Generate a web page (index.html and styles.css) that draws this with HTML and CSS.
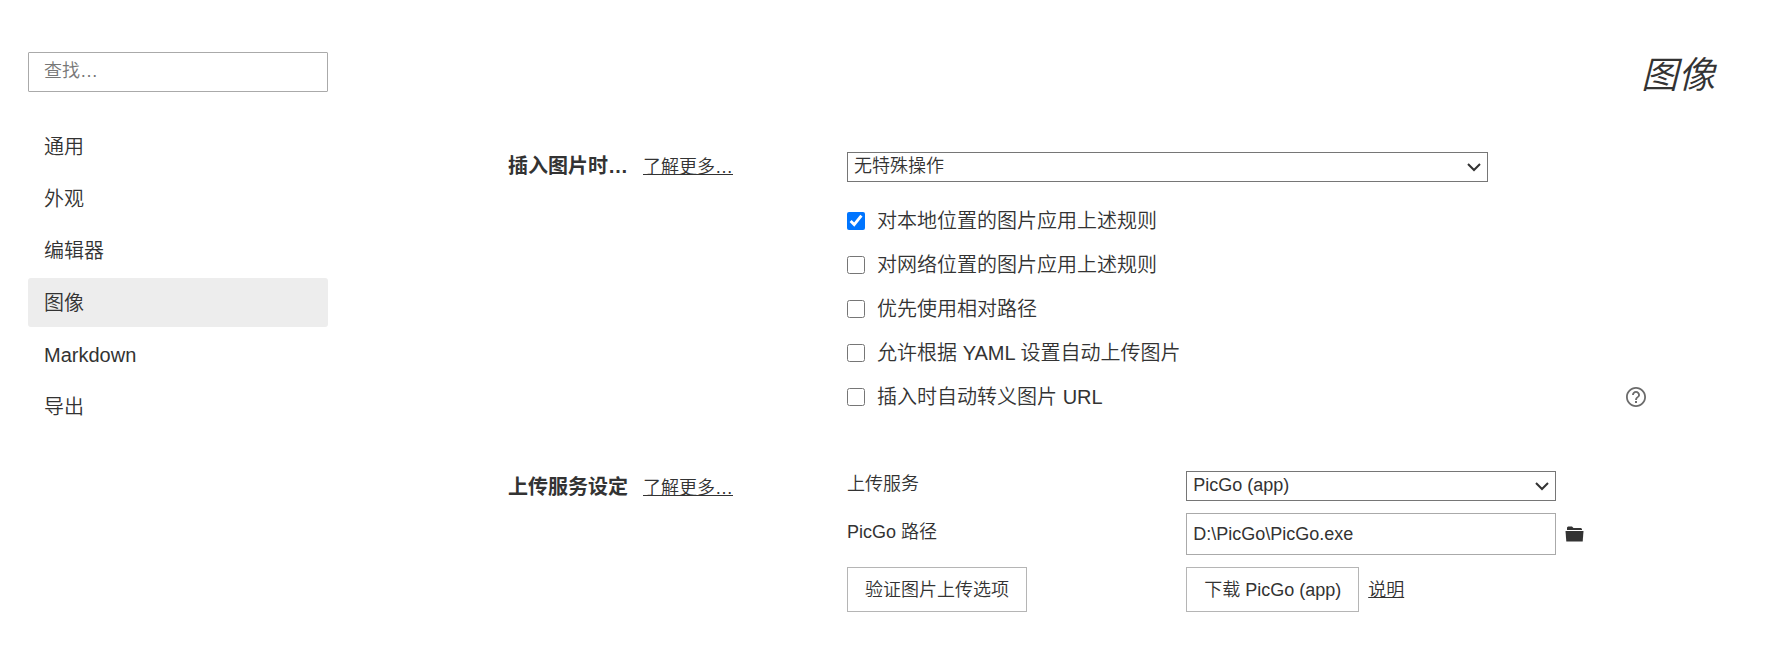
FILE: index.html
```html
<!DOCTYPE html>
<html lang="zh-CN">
<head>
    <meta charset="UTF-8">
    <meta name="viewport" content="width=device-width, initial-scale=1.0">
    <title>图像</title>
    <link rel="stylesheet" href="styles.css">
</head>
<body>
    <div class="preferences">
        <aside class="sidebar">
            <input type="search" class="search" placeholder="查找…" aria-label="查找">
            <nav class="menu">
                <a href="#">通用</a>
                <a href="#">外观</a>
                <a href="#">编辑器</a>
                <a href="#" class="active">图像</a>
                <a href="#">Markdown</a>
                <a href="#">导出</a>
            </nav>
        </aside>

        <main class="content">
            <h1>图像</h1>

            <section class="group">
                <div class="group-title">
                    <h2>插入图片时…</h2>
                    <a href="#">了解更多…</a>
                </div>
                <div class="rules">
                    <select class="rule-select" aria-label="插入图片时">
                        <option>无特殊操作</option>
                    </select>
                    <div class="option">
                        <input type="checkbox" id="apply-local" checked>
                        <label for="apply-local">对本地位置的图片应用上述规则</label>
                    </div>
                    <div class="option">
                        <input type="checkbox" id="apply-online">
                        <label for="apply-online">对网络位置的图片应用上述规则</label>
                    </div>
                    <div class="option">
                        <input type="checkbox" id="relative-path">
                        <label for="relative-path">优先使用相对路径</label>
                    </div>
                    <div class="option">
                        <input type="checkbox" id="yaml-upload">
                        <label for="yaml-upload">允许根据 YAML 设置自动上传图片</label>
                    </div>
                    <div class="option">
                        <input type="checkbox" id="escape-url">
                        <label for="escape-url">插入时自动转义图片 URL</label>
                        <button type="button" class="icon-button help" aria-label="帮助">
                            <svg width="20" height="20" viewBox="2 2 20 20" fill="#6b6b6b">
                                <path d="M11 18h2v-2h-2v2zm1-16C6.48 2 2 6.48 2 12s4.480 10 10 10 10-4.480 10-10S17.520 2 12 2zm0 18.200c-4.500 0-8.200-3.700-8.200-8.200s3.700-8.200 8.200-8.200 8.200 3.700 8.200 8.200-3.700 8.200-8.200 8.200zM12 6c-2.210 0-4 1.790-4 4h1.900c0-1.200 1-2.200 2.100-2.200s2.100 1 2.100 2.200c0 2-3 1.750-3 5h1.900c0-2.250 3-2.500 3-5 0-2.210-1.790-4-4-4z"/>
                            </svg>
                        </button>
                    </div>
                </div>
            </section>

            <section class="group">
                <div class="group-title">
                    <h2>上传服务设定</h2>
                    <a href="#">了解更多…</a>
                </div>
                <div class="upload">
                    <label for="service">上传服务</label>
                    <div class="field">
                        <select id="service">
                            <option>PicGo (app)</option>
                        </select>
                    </div>
                    <label for="path">PicGo 路径</label>
                    <div class="field">
                        <input type="text" id="path" value="D:\PicGo\PicGo.exe">
                        <button type="button" class="icon-button" aria-label="选择文件">
                            <svg width="19" height="16" viewBox="0 0 19 16" fill="#333">
                                <path d="M2 4V1.500L3 .5h4l1.500 1.500h7.500l1 1V4z"/>
                                <path d="M.5 5h18l-.8 10.500H1.300z"/>
                            </svg>
                        </button>
                    </div>
                    <div>
                        <button type="button" class="btn">验证图片上传选项</button>
                    </div>
                    <div class="field">
                        <button type="button" class="btn">下载 PicGo (app)</button>
                        <a href="#">说明</a>
                    </div>
                </div>
            </section>
        </main>
    </div>
</body>
</html>
```

FILE: styles.css
```css
* {
    box-sizing: border-box;
}

body {
    margin: 0;
    background: #fff;
    color: #333;
    font-family: "Liberation Sans", "Noto Sans CJK SC", sans-serif;
    font-size: 18px;
    font-weight: 350;
    line-height: 26px;
}

a {
    color: #333;
}

input,
select,
button {
    margin: 0;
    font: inherit;
    color: #333;
}

.preferences {
    display: flex;
    gap: 180px;
    padding: 52px 55px 36px 28px;
}

/* Sidebar */
.sidebar {
    flex: none;
    width: 300px;
}

.search {
    display: block;
    width: 100%;
    height: 40px;
    padding: 0 15px 2px;
    border: 1px solid #aaa;
    border-radius: 1px;
    appearance: none;
}

.search::placeholder {
    color: #777;
}

.menu {
    display: flex;
    flex-direction: column;
    gap: 3px;
    margin-top: 30px;
}

.menu a {
    padding: 2px 16px 0;
    border-radius: 3px;
    font-size: 20px;
    line-height: 47px;
    text-decoration: none;
}

.menu a.active {
    background: #ededed;
}

/* Content */
.content {
    flex: 1;
    min-width: 0;
}

h1 {
    margin: 0 0 52px;
    padding-right: 4px;
    font-size: 37px;
    font-style: italic;
    font-weight: inherit;
    line-height: 48px;
    text-align: right;
}

h2 {
    margin: 0;
    font-size: 20px;
    line-height: 28px;
}

.group {
    display: grid;
    grid-template-columns: 28fr 72fr;
    align-items: start;
}

.group + .group {
    margin-top: 52px;
}

.group-title {
    display: flex;
    align-items: baseline;
    gap: 15px;
}

.group + .group .group-title {
    padding-top: 2px;
}

select {
    width: 100%;
    height: 30px;
    padding: 0 26px 2px 6px;
    background: #fff url("data:image/svg+xml,%3Csvg xmlns='http://www.w3.org/2000/svg' width='14' height='9' fill='none' stroke='%23333' stroke-width='2'%3E%3Cpath d='M1 1l6 6 6-6'/%3E%3C/svg%3E") no-repeat right 6px center;
    border: 1px solid #767676;
    border-radius: 0;
    appearance: none;
}

.rules {
    padding-right: 73px;
}

.rule-select {
    width: calc(100% - 158px);
    margin-bottom: 17px;
}

.option {
    display: flex;
    align-items: center;
    gap: 12px;
    height: 44px;
    font-size: 20px;
}

.option input {
    width: 18px;
    height: 18px;
}

.icon-button {
    display: flex;
    padding: 0;
    background: none;
    border: none;
    cursor: pointer;
}

.help {
    margin-left: auto;
}

.upload {
    display: grid;
    grid-template-columns: 28fr 44fr;
    align-items: center;
    row-gap: 12px;
}

.upload label {
    padding-bottom: 4px;
}

.field {
    display: flex;
    align-items: center;
    gap: 9px;
}

.field select,
.field input {
    width: calc(100% - 163px);
}

.field input {
    height: 42px;
    padding: 0 6px;
    border: 1px solid #aaa;
}

.btn {
    height: 45px;
    padding: 0 17px;
    background: #fff;
    border: 1px solid #b5b5b5;
    cursor: pointer;
}
```
